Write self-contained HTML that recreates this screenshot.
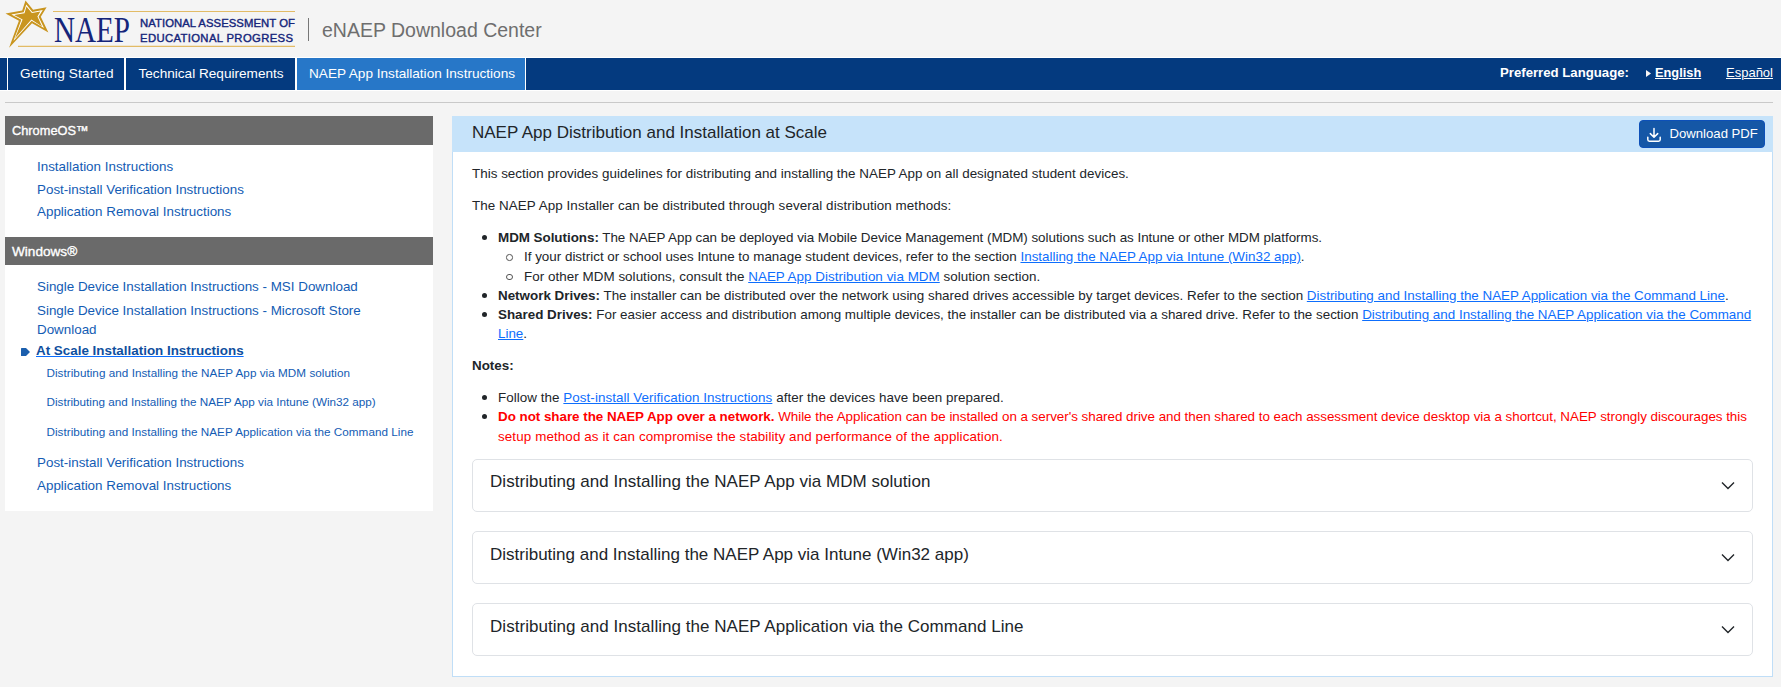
<!DOCTYPE html>
<html><head><meta charset="utf-8">
<style>
*{margin:0;padding:0;box-sizing:border-box}
html,body{width:1781px;height:687px;overflow:hidden;background:#f4f4f4;font-family:"Liberation Sans",sans-serif;position:relative}
.a{position:absolute;white-space:nowrap}
#nav{left:0;top:58px;width:1781px;height:32px;background:#043a7f}
.tab{position:absolute;top:58px;height:32px;background:#043a7f;color:#fff;font-size:13.6px;line-height:32px}
#hr{left:5px;top:102px;width:1768px;height:1px;background:#c9c9c9}
.sh{position:absolute;left:5px;width:428px;background:#6a6a6a;color:#fff;font-weight:normal;font-size:13.2px;-webkit-text-stroke:0.35px #fff}
.sp{position:absolute;left:5px;width:428px;background:#fff}
.sl{position:absolute;color:#135cb4;font-size:13.4px;line-height:19px;white-space:nowrap}
.ss{position:absolute;color:#135cb4;font-size:11.7px;line-height:16px;white-space:nowrap}
#main{left:452px;top:116px;width:1321px;height:561px;background:#fff;border:1px solid #c0def7}
#mh{left:452px;top:116px;width:1321px;height:36px;background:#c6e3fa}
.t{position:absolute;font-size:13.4px;line-height:19.2px;color:#212529;white-space:nowrap}
.lk{color:#0d6efd;text-decoration:underline}
.red{color:#f00}
.dot{position:absolute;width:5px;height:5px;border-radius:50%;background:#212529}
.circ{position:absolute;width:6.5px;height:6.5px;border-radius:50%;border:1.2px solid #555}
.acc{position:absolute;left:472px;width:1281px;height:53px;border:1px solid #dfe2e6;border-radius:5px;background:#fff}
.acc span{position:absolute;left:17px;top:-3px;font-size:17px;line-height:51px;color:#212529;white-space:nowrap}
.acc svg{position:absolute;left:1248px;top:20.5px}
</style></head><body>

<!-- Logo -->
<svg class="a" style="left:0;top:0" width="300" height="52" viewBox="0 0 300 52">
  <line x1="53" y1="11.5" x2="295" y2="11.5" stroke="#e2bb66" stroke-width="1.2"/>
  <line x1="18" y1="46.4" x2="295" y2="46.4" stroke="#e2bb66" stroke-width="1.2"/>
  <polygon fill="#c9951f" points="25.5,0.4 33.1,9.8 46.6,7.3 40.8,16.8 48.4,32.4 32,23.3 9.1,47.7 18.9,20.8 5.5,13.5 22.2,10.6"/>
  <polygon fill="#fff" points="26.27,4.4 32.29,11.98 42.8,9.9 38.52,16.69 44.0,27.9 31.61,20.80 13.4,41.0 21.37,19.87 11.3,14.45 23.73,12.36"/>
  <polygon fill="#c9951f" points="26.45,6.5 31.9,13.1 40.4,11.6 37.4,16.6 42.1,26.4 31.4,19.5 15.0,38.3 22.6,19.4 14.1,14.9 24.5,13.25"/>
  <text x="54" y="41.8" font-family="Liberation Serif" font-size="36" fill="#15257a" textLength="76" lengthAdjust="spacingAndGlyphs">NAEP</text>
  <text x="140" y="26.6" font-family="Liberation Sans" font-size="11.3" stroke="#15257a" stroke-width="0.4" fill="#15257a" textLength="155" lengthAdjust="spacing">NATIONAL ASSESSMENT OF</text>
  <text x="140" y="42.3" font-family="Liberation Sans" font-size="11.3" stroke="#15257a" stroke-width="0.4" fill="#15257a" textLength="153" lengthAdjust="spacing">EDUCATIONAL PROGRESS</text>
</svg>
<div class="a" style="left:308px;top:18px;width:1px;height:23px;background:#777"></div>
<div class="a" style="left:322px;top:17px;font-size:19.5px;line-height:26px;color:#6e6e6e">eNAEP Download Center</div>

<!-- Nav -->
<div class="a" id="nav"></div>
<div class="a" style="left:0;top:57px;width:1781px;height:1px;background:#fff"></div>
<div class="a" style="left:0;top:90px;width:1781px;height:1px;background:#fff"></div>
<div class="a" style="left:7px;top:58px;width:1px;height:32px;background:#fff"></div>
<div class="tab" style="left:8px;width:116px;padding-left:12px;letter-spacing:0.15px">Getting Started</div>
<div class="a" style="left:124px;top:58px;width:2px;height:32px;background:#fff"></div>
<div class="tab" style="left:126px;width:169px;padding-left:12.5px">Technical Requirements</div>
<div class="a" style="left:295px;top:58px;width:2px;height:32px;background:#fff"></div>
<div class="tab" style="left:297px;width:228px;padding-left:12px;background:#2777c8">NAEP App Installation Instructions</div>
<div class="a" style="left:525px;top:58px;width:1px;height:32px;background:#fff"></div>
<div class="a" style="left:1500px;top:57px;line-height:32px;font-size:13.2px;color:#fff;font-weight:bold">Preferred Language:</div>
<svg class="a" style="left:1645px;top:68px" width="8" height="10"><polygon points="1,2 6,5.5 1,9" fill="#f8f4f4"/></svg>
<div class="a" style="left:1655px;top:57px;line-height:32px;font-size:12.8px;color:#fff;font-weight:bold;text-decoration:underline">English</div>
<div class="a" style="left:1726px;top:57px;line-height:32px;font-size:13px;color:#fff;text-decoration:underline">Español</div>
<div class="a" id="hr"></div>

<!-- Sidebar -->
<div class="sh" style="top:116px;height:29px;line-height:29px;padding-left:7px;font-size:12.8px">ChromeOS™</div>
<div class="sp" style="top:145px;height:92px"></div>
<div class="sl" style="left:37px;top:157px">Installation Instructions</div>
<div class="sl" style="left:37px;top:180px">Post-install Verification Instructions</div>
<div class="sl" style="left:37px;top:202px">Application Removal Instructions</div>
<div class="sh" style="top:237px;height:28px;line-height:29px;padding-left:7px;font-size:13.6px">Windows®</div>
<div class="sp" style="top:265px;height:246px"></div>
<div class="sl" style="left:37px;top:277px">Single Device Installation Instructions - MSI Download</div>
<div class="sl" style="left:37px;top:301px">Single Device Installation Instructions - Microsoft Store</div>
<div class="sl" style="left:37px;top:320px">Download</div>
<svg class="a" style="left:20px;top:347px" width="11" height="10"><path d="M1,1.5 Q1,1 1.5,1 L6,1 L10,5 L6,9 L1.5,9 Q1,9 1,8.5 Z" fill="#1b5fad"/></svg>
<div class="sl" style="left:36px;top:341px;font-weight:bold;text-decoration:underline;color:#0f4f9e;text-decoration-color:#0d6efd">At Scale Installation Instructions</div>
<div class="ss" style="left:46.5px;top:365px;letter-spacing:0.04px">Distributing and Installing the NAEP App via MDM solution</div>
<div class="ss" style="left:46.5px;top:394px">Distributing and Installing the NAEP App via Intune (Win32 app)</div>
<div class="ss" style="left:46.5px;top:424px;letter-spacing:0.03px">Distributing and Installing the NAEP Application via the Command Line</div>
<div class="sl" style="left:37px;top:453px">Post-install Verification Instructions</div>
<div class="sl" style="left:37px;top:476px">Application Removal Instructions</div>

<!-- Main -->
<div class="a" id="main"></div>
<div class="a" id="mh"></div>
<div class="a" style="left:472px;top:122px;font-size:17px;line-height:22px;color:#212529">NAEP App Distribution and Installation at Scale</div>
<div class="a" style="left:1639px;top:120px;width:126px;height:28px;background:#1557a6;border:1px solid #0d50b8;border-radius:4px"></div>
<svg class="a" style="left:1646px;top:127px" width="16" height="16" viewBox="0 0 16 16"><path d="M8,1.5 V10 M4.3,6.6 L8,10.3 L11.7,6.6 M1.8,10.3 V12.6 Q1.8,14.2 3.4,14.2 H12.6 Q14.2,14.2 14.2,12.6 V10.3" fill="none" stroke="#fff" stroke-width="1.5" stroke-linecap="round" stroke-linejoin="round"/></svg>
<div class="a" style="left:1669.5px;top:124px;font-size:13.15px;line-height:19px;color:#fff">Download PDF</div>

<div class="t" style="left:472px;top:164px;letter-spacing:0.025px">This section provides guidelines for distributing and installing the NAEP App on all designated student devices.</div>
<div class="t" style="left:472px;top:196px;letter-spacing:0.078px">The NAEP App Installer can be distributed through several distribution methods:</div>

<div class="dot" style="left:482px;top:235px"></div>
<div class="t" style="left:498px;top:227.6px;letter-spacing:-0.024px"><b>MDM Solutions:</b> The NAEP App can be deployed via Mobile Device Management (MDM) solutions such as Intune or other MDM platforms.</div>
<div class="circ" style="left:506px;top:254px"></div>
<div class="t" style="left:524px;top:246.8px">If your district or school uses Intune to manage student devices, refer to the section <span class="lk">Installing the NAEP App via Intune (Win32 app)</span>.</div>
<div class="circ" style="left:506px;top:273.5px"></div>
<div class="t" style="left:524px;top:267px;letter-spacing:0.045px">For other MDM solutions, consult the <span class="lk">NAEP App Distribution via MDM</span> solution section.</div>
<div class="dot" style="left:482px;top:293px"></div>
<div class="t" style="left:498px;top:286px"><b>Network Drives:</b> The installer can be distributed over the network using shared drives accessible by target devices. Refer to the section <span class="lk">Distributing and Installing the NAEP Application via the Command Line</span>.</div>
<div class="dot" style="left:482px;top:312px"></div>
<div class="t" style="left:498px;top:305px"><b>Shared Drives:</b> For easier access and distribution among multiple devices, the installer can be distributed via a shared drive. Refer to the section <span class="lk">Distributing and Installing the NAEP Application via the Command</span></div>
<div class="t" style="left:498px;top:323.6px"><span class="lk">Line</span>.</div>

<div class="t" style="left:472px;top:355.6px"><b>Notes:</b></div>
<div class="dot" style="left:482px;top:395px"></div>
<div class="t" style="left:498px;top:388.3px;letter-spacing:0.055px">Follow the <span class="lk">Post-install Verification Instructions</span> after the devices have been prepared.</div>
<div class="dot" style="left:482px;top:414px"></div>
<div class="t red" style="left:498px;top:406.5px;letter-spacing:-0.026px"><b>Do not share the NAEP App over a network.</b> While the Application can be installed on a server's shared drive and then shared to each assessment device desktop via a shortcut, NAEP strongly discourages this</div>
<div class="t red" style="left:498px;top:426.7px;letter-spacing:0.11px">setup method as it can compromise the stability and performance of the application.</div>

<div class="acc" style="top:459px"><span style="top:-4px;letter-spacing:0.04px">Distributing and Installing the NAEP App via MDM solution</span><svg width="14" height="9"><path d="M1,1.5 L7,7.5 L13,1.5" fill="none" stroke="#212529" stroke-width="1.4"/></svg></div>
<div class="acc" style="top:531px"><span>Distributing and Installing the NAEP App via Intune (Win32 app)</span><svg width="14" height="9"><path d="M1,1.5 L7,7.5 L13,1.5" fill="none" stroke="#212529" stroke-width="1.4"/></svg></div>
<div class="acc" style="top:603px"><span style="letter-spacing:0.04px">Distributing and Installing the NAEP Application via the Command Line</span><svg width="14" height="9"><path d="M1,1.5 L7,7.5 L13,1.5" fill="none" stroke="#212529" stroke-width="1.4"/></svg></div>

</body></html>
